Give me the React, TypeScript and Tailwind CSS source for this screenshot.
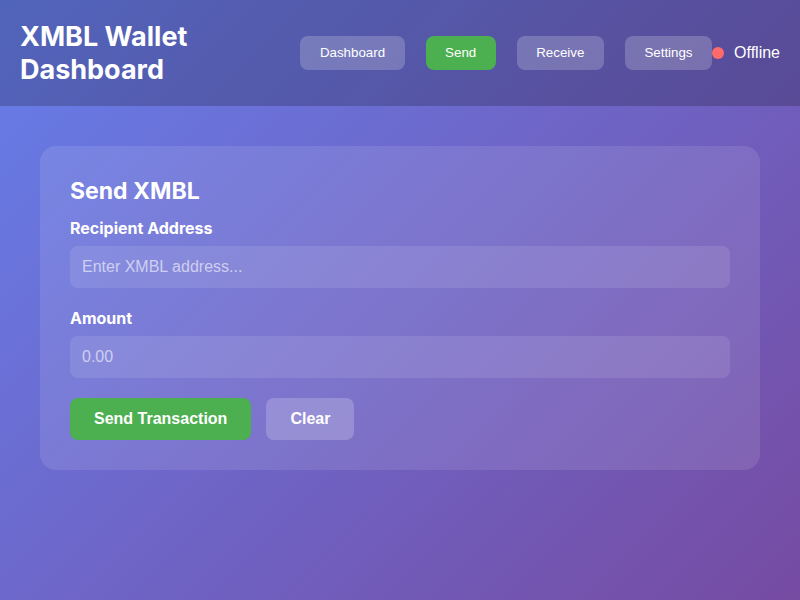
import { useState } from "react";

const navItems = ["Dashboard", "Send", "Receive", "Settings"];

export default function App() {
  const [active] = useState("Send");
  const [address, setAddress] = useState("");
  const [amount, setAmount] = useState("");

  return (
    <div className="min-h-screen w-full bg-[linear-gradient(135deg,#667eea_0%,#764ba2_100%)] font-['Inter',sans-serif] text-white">
      {/* Header */}
      <header className="flex items-center justify-between bg-black/20 px-5 py-5">
        <h1 className="w-[200px] text-[27px] font-bold leading-[33px]">
          XMBL Wallet Dashboard
        </h1>

        <div className="flex items-center">
          <nav className="flex gap-[21px]">
            {navItems.map((item) => (
              <button
                key={item}
                className={
                  item === active
                    ? "rounded-lg bg-[#4caf50] px-[19.5px] py-[9px] font-['Liberation_Sans',Arial,sans-serif] text-[13.33px] leading-[16px] text-white"
                    : "rounded-lg bg-white/20 px-[19.5px] py-[9px] font-['Liberation_Sans',Arial,sans-serif] text-[13.33px] leading-[16px] text-white"
                }
              >
                {item}
              </button>
            ))}
          </nav>
          <div className="flex items-center gap-[10px]">
            <span className="h-3 w-3 rounded-full bg-[#ff6b6b]" />
            <span className="font-['Liberation_Sans',Arial,sans-serif] text-base">
              Offline
            </span>
          </div>
        </div>
      </header>

      {/* Content */}
      <main className="px-10 pt-10">
        <section className="rounded-2xl bg-white/10 p-[30px]">
          <h2 className="mb-[10px] text-[23px] font-bold leading-[30px]">
            Send XMBL
          </h2>

          <div className="mb-[18px]">
            <label className="mb-[6px] block text-base font-bold leading-6">
              Recipient Address
            </label>
            <input
              value={address}
              onChange={(e) => setAddress(e.target.value)}
              placeholder="Enter XMBL address..."
              className="block h-[42px] w-full rounded-lg bg-white/10 px-3 font-['Liberation_Sans',Arial,sans-serif] text-base text-white outline-none placeholder:text-white/60"
            />
          </div>

          <div className="mb-5">
            <label className="mb-[6px] block text-base font-bold leading-6">
              Amount
            </label>
            <input
              value={amount}
              onChange={(e) => setAmount(e.target.value)}
              placeholder="0.00"
              className="block h-[42px] w-full rounded-lg bg-white/10 px-3 font-['Liberation_Sans',Arial,sans-serif] text-base text-white outline-none placeholder:text-white/60"
            />
          </div>

          <div className="flex gap-[15px]">
            <button className="h-[42px] rounded-lg bg-[#4caf50] px-6 font-['Liberation_Sans',Arial,sans-serif] text-base font-bold text-white">
              Send Transaction
            </button>
            <button className="h-[42px] rounded-lg bg-white/20 px-6 font-['Liberation_Sans',Arial,sans-serif] text-base font-bold text-white">
              Clear
            </button>
          </div>
        </section>
      </main>
    </div>
  );
}
